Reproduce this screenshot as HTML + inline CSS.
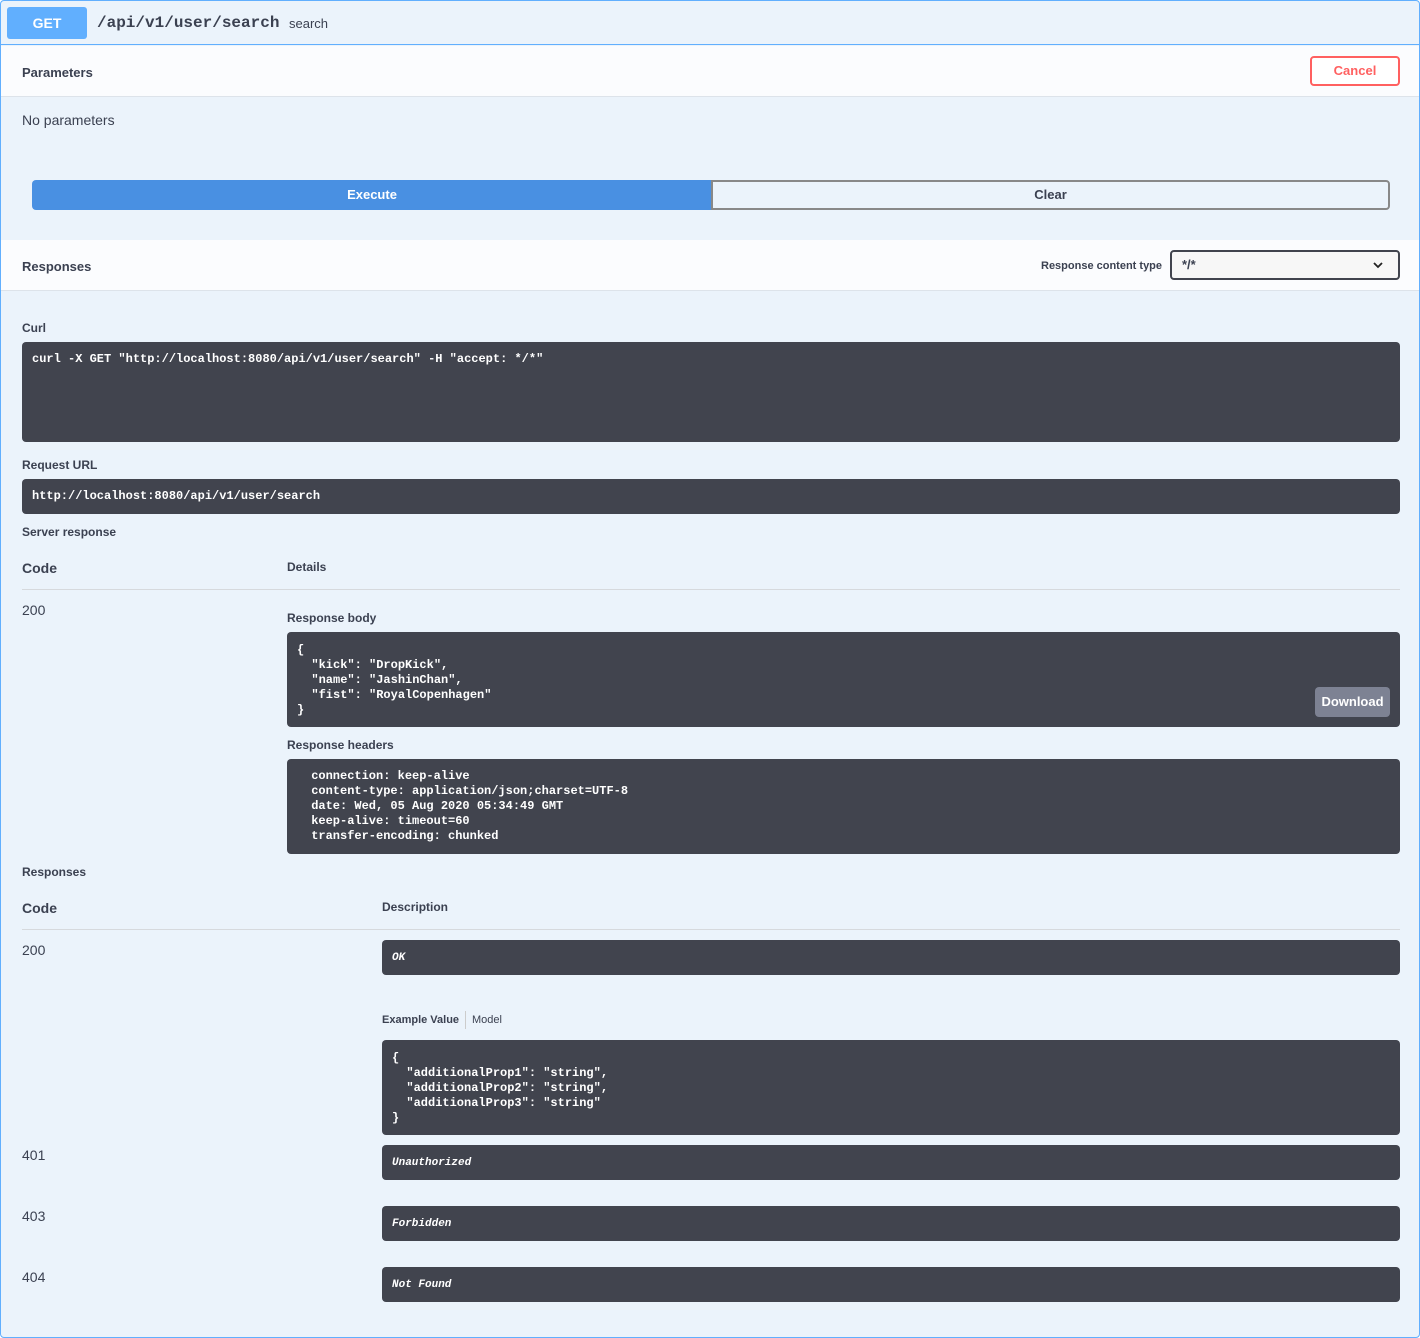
<!DOCTYPE html>
<html><head><meta charset="utf-8"><style>
*{margin:0;padding:0;box-sizing:border-box}
body{width:1420px;height:1338px;background:#fff;font-family:"Liberation Sans",sans-serif;color:#3b4151;position:relative;overflow:hidden}
.wrap{position:absolute;left:0;top:0;width:1420px;height:1338px;background:#ebf3fb;border:1px solid #61affe;border-radius:4px}
.a{position:absolute}
.b{font-weight:bold}
.dark{position:absolute;background:#41444e;border-radius:4px;color:#fff;font-family:"Liberation Mono",monospace;font-weight:bold;font-size:12px;line-height:15px;white-space:pre}
.lbl{position:absolute;font-size:12px;font-weight:bold;color:#3b4151}
.it{font-style:italic}
</style></head><body>
<div class="wrap">
 <div class="a" style="left:0;top:0;width:1418px;height:44px;border-bottom:1px solid #61affe"></div>
 <div class="a b" style="left:6px;top:6px;width:80px;height:32px;background:#61affe;border-radius:3px;color:#fff;font-size:14px;text-align:center;line-height:32px">GET</div>
 <div class="a" style="left:96px;top:13px;font-family:'Liberation Mono',monospace;font-size:16px;font-weight:bold;color:#3b4151">/api/v1/user/search</div>
 <div class="a" style="left:288px;top:15px;font-size:13px">search</div>

 <div class="a" style="left:0;top:45px;width:1418px;height:51px;background:#fbfcfe;border-bottom:1px solid #dde3ea"></div>
 <div class="lbl" style="left:21px;top:64px;font-size:13px">Parameters</div>
 <div class="a b" style="left:1309px;top:55px;width:90px;height:30px;border:2px solid #ff6060;border-radius:4px;color:#ff6060;font-size:13px;text-align:center;line-height:26px;background:#fff">Cancel</div>

 <div class="a" style="left:21px;top:111px;font-size:14px">No parameters</div>

 <div class="a b" style="left:31px;top:179px;width:680px;height:30px;background:#4990e2;border-radius:4px 0 0 4px;color:#fff;font-size:13px;text-align:center;line-height:30px">Execute</div>
 <div class="a b" style="left:710px;top:179px;width:679px;height:30px;border:2px solid #888;border-radius:0 4px 4px 0;font-size:13px;text-align:center;line-height:26px">Clear</div>

 <div class="a" style="left:0;top:239px;width:1418px;height:51px;background:#fbfcfe;border-bottom:1px solid #dde3ea"></div>
 <div class="lbl" style="left:21px;top:258px;font-size:13px">Responses</div>
 <div class="lbl" style="left:1040px;top:259px;font-size:11px">Response content type</div>
 <div class="a b" style="left:1169px;top:249px;width:230px;height:30px;border:2px solid #41444e;border-radius:4px;background:#f7f7f7;font-size:13px;line-height:26px;padding-left:10px">*/*</div>
 <svg class="a" style="left:1371px;top:259px" width="12" height="10" viewBox="0 0 12 10"><path d="M2 3l4 4 4-4" stroke="#222" stroke-width="1.8" fill="none"/></svg>

 <div class="lbl" style="left:21px;top:320px">Curl</div>
 <div class="dark" style="left:21px;top:341px;width:1378px;height:100px;padding:10px">curl -X GET "http://localhost:8080/api/v1/user/search" -H "accept: */*"</div>
 <div class="lbl" style="left:21px;top:457px">Request URL</div>
 <div class="dark" style="left:21px;top:478px;width:1378px;height:35px;padding:10px">http://localhost:8080/api/v1/user/search</div>
 <div class="lbl" style="left:21px;top:524px">Server response</div>

 <div class="a b" style="left:21px;top:559px;font-size:14px">Code</div>
 <div class="lbl" style="left:286px;top:559px">Details</div>
 <div class="a" style="left:21px;top:588px;width:1378px;height:1px;background:#d6d9dd"></div>
 <div class="a" style="left:21px;top:601px;font-size:14px">200</div>
 <div class="lbl" style="left:286px;top:610px">Response body</div>
 <div class="dark" style="left:286px;top:631px;width:1113px;height:95px;padding:11px 10px">{
  "kick": "DropKick",
  "name": "JashinChan",
  "fist": "RoyalCopenhagen"
}</div>
 <div class="a b" style="left:1314px;top:686px;width:75px;height:30px;background:#7d8293;border-radius:4px;color:#fff;font-size:13px;text-align:center;line-height:30px">Download</div>
 <div class="lbl" style="left:286px;top:737px">Response headers</div>
 <div class="dark" style="left:286px;top:758px;width:1113px;height:95px;padding:10px 17px"> connection: keep-alive
 content-type: application/json;charset=UTF-8
 date: Wed, 05 Aug 2020 05:34:49 GMT
 keep-alive: timeout=60
 transfer-encoding: chunked</div>

 <div class="lbl" style="left:21px;top:864px">Responses</div>
 <div class="a b" style="left:21px;top:899px;font-size:14px">Code</div>
 <div class="lbl" style="left:381px;top:899px">Description</div>
 <div class="a" style="left:21px;top:928px;width:1378px;height:1px;background:#d6d9dd"></div>

 <div class="a" style="left:21px;top:941px;font-size:14px">200</div>
 <div class="dark it" style="left:381px;top:939px;width:1018px;height:35px;padding:11px 10px;font-size:11px">OK</div>
 <div class="a b" style="left:381px;top:1013px;font-size:11px">Example Value</div>
 <div class="a" style="left:464px;top:1010px;width:1px;height:18px;background:#ccc"></div>
 <div class="a" style="left:471px;top:1013px;font-size:11px">Model</div>
 <div class="dark" style="left:381px;top:1039px;width:1018px;height:95px;padding:11px 10px">{
  "additionalProp1": "string",
  "additionalProp2": "string",
  "additionalProp3": "string"
}</div>

 <div class="a" style="left:21px;top:1146px;font-size:14px">401</div>
 <div class="dark it" style="left:381px;top:1144px;width:1018px;height:35px;padding:11px 10px;font-size:11px">Unauthorized</div>
 <div class="a" style="left:21px;top:1207px;font-size:14px">403</div>
 <div class="dark it" style="left:381px;top:1205px;width:1018px;height:35px;padding:11px 10px;font-size:11px">Forbidden</div>
 <div class="a" style="left:21px;top:1268px;font-size:14px">404</div>
 <div class="dark it" style="left:381px;top:1266px;width:1018px;height:35px;padding:11px 10px;font-size:11px">Not Found</div>
</div>
</body></html>
